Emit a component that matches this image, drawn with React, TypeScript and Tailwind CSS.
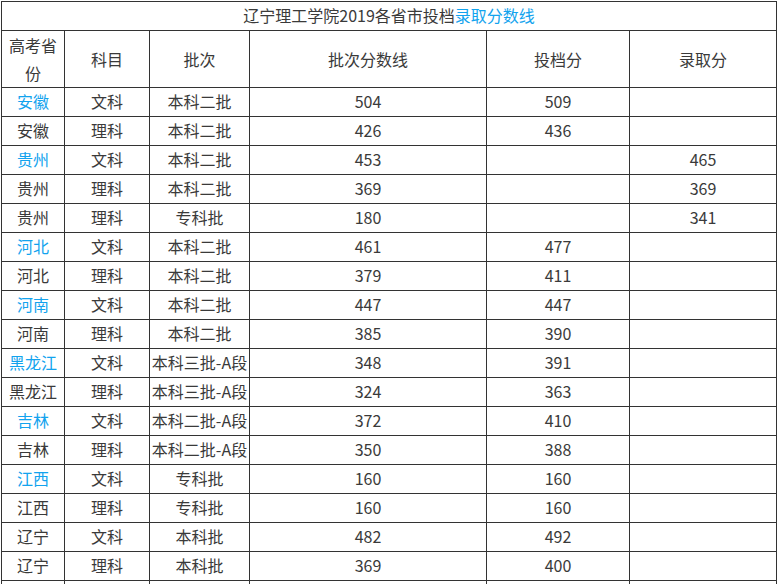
const rows: { p: string; blue?: boolean; k: string; b: string; line: string; td: string; lq: string }[] = [
  { p: "安徽", blue: true, k: "文科", b: "本科二批", line: "504", td: "509", lq: "" },
  { p: "安徽", k: "理科", b: "本科二批", line: "426", td: "436", lq: "" },
  { p: "贵州", blue: true, k: "文科", b: "本科二批", line: "453", td: "", lq: "465" },
  { p: "贵州", k: "理科", b: "本科二批", line: "369", td: "", lq: "369" },
  { p: "贵州", k: "理科", b: "专科批", line: "180", td: "", lq: "341" },
  { p: "河北", blue: true, k: "文科", b: "本科二批", line: "461", td: "477", lq: "" },
  { p: "河北", k: "理科", b: "本科二批", line: "379", td: "411", lq: "" },
  { p: "河南", blue: true, k: "文科", b: "本科二批", line: "447", td: "447", lq: "" },
  { p: "河南", k: "理科", b: "本科二批", line: "385", td: "390", lq: "" },
  { p: "黑龙江", blue: true, k: "文科", b: "本科三批-A段", line: "348", td: "391", lq: "" },
  { p: "黑龙江", k: "理科", b: "本科三批-A段", line: "324", td: "363", lq: "" },
  { p: "吉林", blue: true, k: "文科", b: "本科二批-A段", line: "372", td: "410", lq: "" },
  { p: "吉林", k: "理科", b: "本科二批-A段", line: "350", td: "388", lq: "" },
  { p: "江西", blue: true, k: "文科", b: "专科批", line: "160", td: "160", lq: "" },
  { p: "江西", k: "理科", b: "专科批", line: "160", td: "160", lq: "" },
  { p: "辽宁", k: "文科", b: "本科批", line: "482", td: "492", lq: "" },
  { p: "辽宁", k: "理科", b: "本科批", line: "369", td: "400", lq: "" },
  { p: "", k: "", b: "", line: "", td: "", lq: "" },
];

const cell = "border border-[#333] text-center p-0 pb-px h-[29px] leading-[27px]";

export default function App() {
  return (
    <div
      className="bg-white pt-px pl-px text-[16px] text-[#3a3a3a]"
      style={{ fontFamily: '"Noto Sans CJK SC", "Noto Sans", sans-serif' }}
    >
      <table className="table-fixed border-collapse w-[776px]">
        <colgroup>
          <col className="w-[63px]" />
          <col className="w-[85px]" />
          <col className="w-[100px]" />
          <col className="w-[237px]" />
          <col className="w-[143px]" />
          <col className="w-[147px]" />
        </colgroup>
        <tbody>
          <tr>
            <td colSpan={6} className={cell}>
              辽宁理工学院2019各省市投档<span className="text-[#12a3ee]">录取分数线</span>
            </td>
          </tr>
          <tr>
            <td className="border border-[#333] text-center p-0 h-[57px] leading-[28px]">高考省份</td>
            <td className="border border-[#333] text-center p-0">科目</td>
            <td className="border border-[#333] text-center p-0">批次</td>
            <td className="border border-[#333] text-center p-0">批次分数线</td>
            <td className="border border-[#333] text-center p-0">投档分</td>
            <td className="border border-[#333] text-center p-0">录取分</td>
          </tr>
          {rows.map((r, i) => (
            <tr key={i}>
              <td className={`${cell} ${r.blue ? "text-[#12a3ee]" : ""}`}>{r.p}</td>
              <td className={cell}>{r.k}</td>
              <td className={`${cell} whitespace-nowrap`}>{r.b}</td>
              <td className={cell}>{r.line}</td>
              <td className={cell}>{r.td}</td>
              <td className={cell}>{r.lq}</td>
            </tr>
          ))}
        </tbody>
      </table>
    </div>
  );
}
